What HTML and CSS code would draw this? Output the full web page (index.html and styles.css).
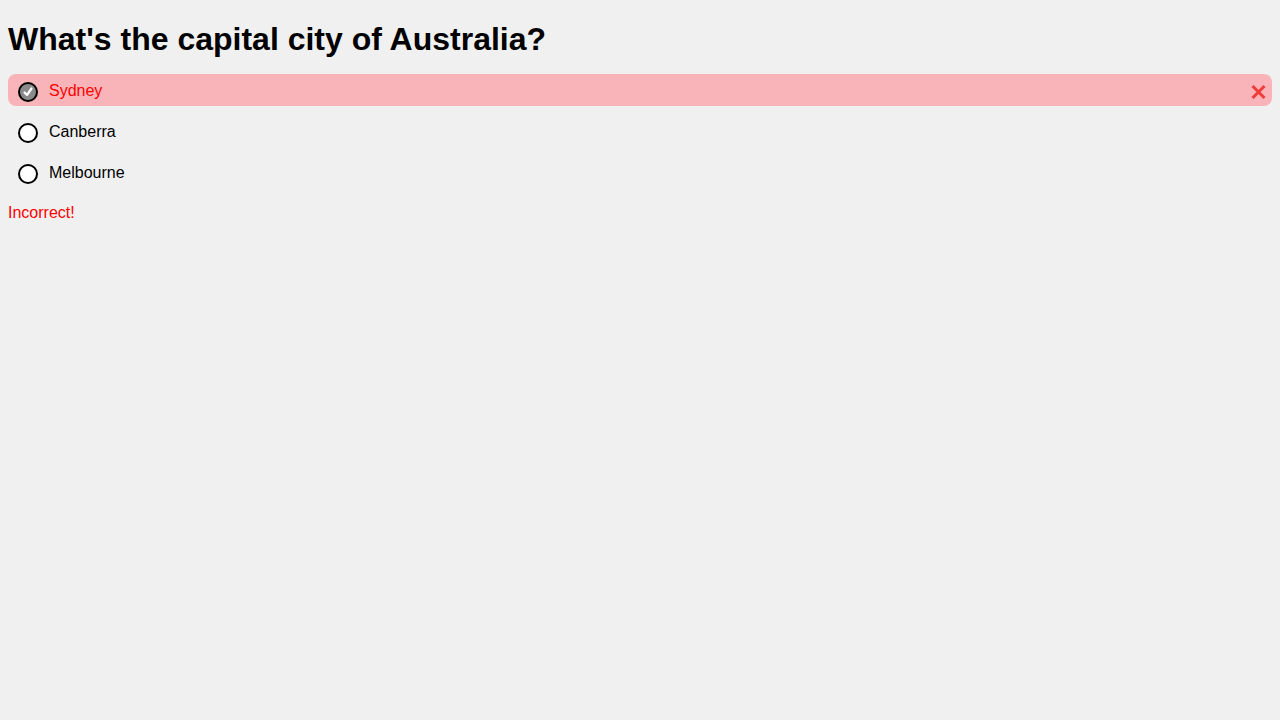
FILE: index.html
```html
<!DOCTYPE html>
<html lang="en">
<head>
<meta charset="utf-8">
<title>Quiz</title>
<link rel="stylesheet" href="styles.css">
</head>
<body>
<div class="quiz">
  <h1 class="question">What's the capital city of Australia?</h1>
  <div class="options">
    <label class="option option-wrong">
      <span class="radio radio-checked">
        <svg width="12" height="12" viewBox="0 0 12 12"><path d="M2.5 6.5 L5 9 L9.5 2.5" fill="none" stroke="#fff" stroke-width="2.2" stroke-linecap="round" stroke-linejoin="round"/></svg>
      </span>
      <span class="option-text">Sydney</span>
      <span class="mark">
        <svg width="15" height="14" viewBox="0 0 15 14"><path d="M1.5 1 L13.5 13 M13.5 1 L1.5 13" stroke="#ee3e3a" stroke-width="3"/></svg>
      </span>
    </label>
    <label class="option">
      <span class="radio"></span>
      <span class="option-text">Canberra</span>
    </label>
    <label class="option">
      <span class="radio"></span>
      <span class="option-text">Melbourne</span>
    </label>
  </div>
  <p class="feedback">Incorrect!</p>
</div>
</body>
</html>
```
FILE: styles.css
```css
html, body {
  margin: 0;
  padding: 0;
  background: #f0f0f0;
}
body {
  font-family: "Liberation Sans", Arial, sans-serif;
  color: #000;
  padding: 0 8px;
}
.quiz {
  padding-top: 21px;
}
.question {
  font-size: 32px;
  font-weight: bold;
  margin: 0 0 16px 0;
  line-height: 37px;
}
.options {
  display: flex;
  flex-direction: column;
  gap: 9px;
}
.option {
  box-sizing: border-box;
  display: flex;
  align-items: flex-start;
  height: 32px;
  padding: 8px 10px 0 10px;
  border-radius: 8px;
  font-size: 16px;
  line-height: 18px;
}
.option-wrong {
  background: #f8b4b8;
  color: #ff0000;
}
.radio {
  box-sizing: border-box;
  width: 20px;
  height: 20px;
  border: 2px solid #000;
  border-radius: 50%;
  background: #fff;
  display: flex;
  align-items: center;
  justify-content: center;
  margin: 0 11px 0 0;
  flex: none;
}
.radio-checked {
  background: #8a8a8a;
}
.option-text {
  flex: 1;
}
.mark {
  display: flex;
  margin: 3px -4px 0 0;
}
.feedback {
  color: #ff0000;
  font-size: 16px;
  margin: 16px 0 0 0;
  line-height: 18px;
}
```
